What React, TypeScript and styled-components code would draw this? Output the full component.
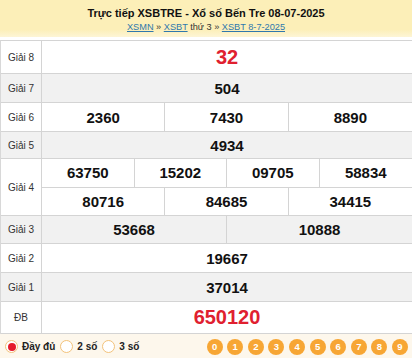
import React from "react";
import styled, { createGlobalStyle } from "styled-components";

const Global = createGlobalStyle`
  html, body { margin: 0; padding: 0; background: #fff; }
  body { font-family: "Liberation Sans", Arial, sans-serif; width: 412px; overflow: hidden; }
  * { box-sizing: border-box; }
`;

const Page = styled.div`
  width: 412px;
`;

const Header = styled.div`
  height: 37px;
  background: linear-gradient(#fcefb8 0%, #fcefb8 80%, #fdf5d6 100%);
  display: flex;
  flex-direction: column;
  align-items: center;
  padding-top: 6px;
  margin-bottom: 3px;
`;

const Title = styled.h1`
  margin: 0;
  font-size: 11px;
  font-weight: bold;
  color: #111;
  line-height: 14px;
`;

const Crumbs = styled.div`
  font-size: 9.2px;
  line-height: 12px;
  color: #333;
  margin-top: 1px;
`;

const Crumb = styled.a`
  color: #2f78ad;
  text-decoration: underline;
`;

const Table = styled.div`
  border-top: 1px solid #d4d4d4;
  border-left: 1px solid #d8d8d8;
`;

const Row = styled.div<{ $h: number; $grey?: boolean }>`
  display: grid;
  grid-template-columns: 41px 1fr;
  height: ${(p) => p.$h}px;
  background: ${(p) => (p.$grey ? "#f1f1f1" : "#fff")};
  border-bottom: 1px solid #d4d4d4;
`;

const Label = styled.div`
  display: flex;
  align-items: center;
  justify-content: center;
  font-size: 10px;
  color: #333;
  border-right: 1px solid #d4d4d4;
`;

const Values = styled.div`
  display: flex;
  flex-direction: column;
`;

const SubRow = styled.div<{ $cols: number; $line?: boolean }>`
  flex: 1;
  display: grid;
  grid-template-columns: repeat(${(p) => p.$cols}, 1fr);
  border-bottom: ${(p) => (p.$line ? "1px solid #d4d4d4" : "none")};
`;

const Num = styled.div<{ $red?: boolean; $big?: boolean }>`
  display: flex;
  align-items: center;
  justify-content: center;
  font-weight: bold;
  font-size: ${(p) => (p.$big ? "20px" : "15px")};
  color: ${(p) => (p.$red ? "#e0202f" : "#111")};
  border-right: 1px solid #d4d4d4;
  &:last-child { border-right: none; }
`;

const Footer = styled.div`
  height: 25px;
  background: #fdf7ec;
  display: flex;
  align-items: center;
  justify-content: space-between;
  padding: 0 4px 0 5px;
`;

const Options = styled.div`
  display: flex;
  align-items: center;
`;

const Radio = styled.span<{ $on?: boolean }>`
  width: 13px;
  height: 13px;
  border-radius: 50%;
  border: 1px solid #f3c27a;
  background: #fff;
  display: inline-flex;
  align-items: center;
  justify-content: center;
  margin-right: 4px;
  &::after {
    content: "";
    width: 8px;
    height: 8px;
    border-radius: 50%;
    background: ${(p) => (p.$on ? "#e51b2b" : "transparent")};
  }
`;

const OptText = styled.span`
  font-size: 10px;
  font-weight: bold;
  color: #222;
  margin-right: 5px;
`;

const Digits = styled.div`
  display: flex;
  gap: 4.6px;
`;

const Digit = styled.span`
  width: 16px;
  height: 16px;
  border-radius: 50%;
  background: #f7a634;
  color: #fff;
  font-size: 9.5px;
  font-weight: bold;
  display: flex;
  align-items: center;
  justify-content: center;
`;

type Prize = { label: string; h: number; grey?: boolean; rows: string[][]; red?: boolean };

const prizes: Prize[] = [
  { label: "Giải 8", h: 33, rows: [["32"]], red: true },
  { label: "Giải 7", h: 29, grey: true, rows: [["504"]] },
  { label: "Giải 6", h: 29, rows: [["2360", "7430", "8890"]] },
  { label: "Giải 5", h: 27, grey: true, rows: [["4934"]] },
  { label: "Giải 4", h: 57, rows: [["63750", "15202", "09705", "58834"], ["80716", "84685", "34415"]] },
  { label: "Giải 3", h: 28, grey: true, rows: [["53668", "10888"]] },
  { label: "Giải 2", h: 29, rows: [["19667"]] },
  { label: "Giải 1", h: 29, grey: true, rows: [["37014"]] },
  { label: "ĐB", h: 32, rows: [["650120"]], red: true },
];

export default function App() {
  return (
    <Page>
      <Global />
      <Header>
        <Title>Trực tiếp XSBTRE - Xổ số Bến Tre 08-07-2025</Title>
        <Crumbs>
          <Crumb>XSMN</Crumb> » <Crumb>XSBT</Crumb> thứ 3 » <Crumb>XSBT 8-7-2025</Crumb>
        </Crumbs>
      </Header>
      <Table>
        {prizes.map((p) => (
          <Row key={p.label} $h={p.h} $grey={p.grey}>
            <Label>{p.label}</Label>
            <Values>
              {p.rows.map((r, i) => (
                <SubRow key={i} $cols={r.length} $line={i < p.rows.length - 1}>
                  {r.map((n) => (
                    <Num key={n} $red={p.red} $big={p.red}>
                      {n}
                    </Num>
                  ))}
                </SubRow>
              ))}
            </Values>
          </Row>
        ))}
      </Table>
      <Footer>
        <Options>
          <Radio $on />
          <OptText>Đầy đủ</OptText>
          <Radio />
          <OptText>2 số</OptText>
          <Radio />
          <OptText>3 số</OptText>
        </Options>
        <Digits>
          {[0, 1, 2, 3, 4, 5, 6, 7, 8, 9].map((d) => (
            <Digit key={d}>{d}</Digit>
          ))}
        </Digits>
      </Footer>
    </Page>
  );
}
